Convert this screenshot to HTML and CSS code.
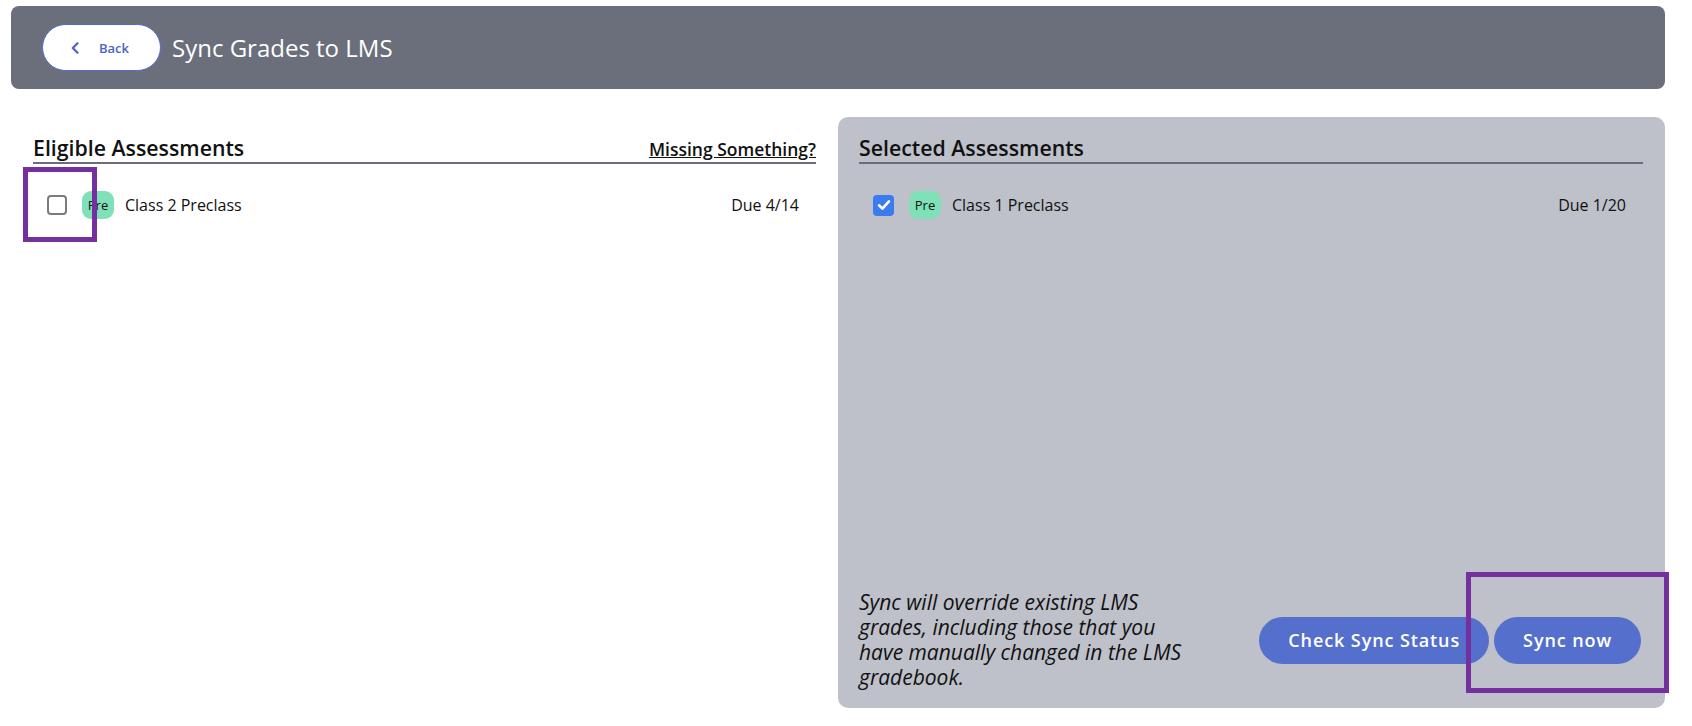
FILE: index.html
```html
<!DOCTYPE html>
<html>
<head>
  <meta charset="UTF-8">
  <meta name="viewport" content="width=device-width, initial-scale=1.0">
  <title>Sync Grades to LMS</title>
  <link rel="stylesheet" href="styles.css">
</head>
<body>
  <div class="page">
    <header class="topbar">
      <button class="back-btn" type="button">
        <svg width="8" height="12" viewBox="0 0 8 12"><path d="M6.5 1.2 L1.8 6 L6.5 10.8" fill="none" stroke="#4a63c8" stroke-width="2.2" stroke-linecap="round" stroke-linejoin="round"/></svg>
        <span>Back</span>
      </button>
      <h1 class="title">Sync Grades to LMS</h1>
    </header>

    <main class="columns">
      <section class="col col-eligible">
        <div class="col-head">
          <h2>Eligible Assessments</h2>
          <a class="missing" href="#">Missing Something?</a>
        </div>
        <ul class="list">
          <li class="row">
            <span class="box"></span>
            <span class="badge">Pre</span>
            <span class="name">Class 2 Preclass</span>
            <span class="due">Due 4/14</span>
          </li>
        </ul>
      </section>

      <section class="col col-selected">
        <div class="col-head">
          <h2>Selected Assessments</h2>
        </div>
        <ul class="list">
          <li class="row">
            <span class="box checked">
              <svg width="14" height="12" viewBox="0 0 14 12"><path d="M2 6.3 L5.4 9.6 L12 2.4" fill="none" stroke="#fff" stroke-width="2.6" stroke-linecap="round" stroke-linejoin="round"/></svg>
            </span>
            <span class="badge">Pre</span>
            <span class="name">Class 1 Preclass</span>
            <span class="due">Due 1/20</span>
          </li>
        </ul>
        <div class="footer">
          <p class="note">Sync will override existing LMS grades, including those that you have manually changed in the LMS gradebook.</p>
          <div class="actions">
            <button class="pill" type="button">Check Sync Status</button>
            <button class="pill" type="button">Sync now</button>
          </div>
        </div>
      </section>
    </main>
  </div>

  <!-- annotation marks -->
  <div class="mark mark-check"></div>
  <div class="mark mark-sync"></div>
</body>
</html>
```

FILE: styles.css
```css
/* base */
body {
  margin: 0;
  font-family: "Open Sans", "Noto Sans", sans-serif;
  color: #111;
  background: #fff;
}
.page {
  width: 1654px;
  padding: 6px 0 0 11px;
}

/* top bar */
.topbar {
  display: flex;
  align-items: center;
  height: 83px;
  padding-left: 31px;
  background-color: #6a6f7b;
  border-radius: 8px;
}
.back-btn {
  display: flex;
  align-items: center;
  gap: 20px;
  width: 119px;
  height: 47px;
  padding: 0 0 0 28px;
  background: #fff;
  border: 1px solid #4f6cd0;
  border-radius: 24px;
  color: #4a63c8;
  font-family: "Open Sans", sans-serif;
  font-size: 13px;
  font-weight: 600;
  cursor: pointer;
}
.title {
  margin: 0 0 0 11px;
  color: #fff;
  font-size: 24px;
  font-weight: 400;
}

/* columns */
.columns {
  display: grid;
  grid-template-columns: 827px 827px;
  margin-top: 28px;
}
.col {
  display: flex;
  flex-direction: column;
  height: 591px;
  box-sizing: border-box;
  padding: 17px 22px 18px 22px;
}
.col-selected {
  padding-left: 21px;
  background-color: #bec1c9;
  border-radius: 10px;
}
.col-head {
  display: flex;
  justify-content: space-between;
  align-items: baseline;
  border-bottom: 2px solid #6b6e7a;
}
.col-head h2 {
  margin: 0;
  font-size: 21.3px;
  line-height: 28px;
  font-weight: 600;
}
.missing {
  color: #111;
  font-size: 17.5px;
  font-weight: 600;
  text-decoration: underline;
}

/* list rows */
.list {
  list-style: none;
  margin: 0;
  padding: 0;
}
.row {
  display: flex;
  align-items: center;
  padding: 27px 17px 0 14px;
  font-size: 16px;
}
.box {
  display: flex;
  align-items: center;
  justify-content: center;
  width: 20px;
  height: 20px;
  box-sizing: border-box;
  border: 2px solid #7b7b7b;
  border-radius: 4px;
  background: #fff;
}
.box.checked {
  width: 21px;
  height: 21px;
  border: none;
  background: #3a7bf0;
}
.badge {
  display: inline-flex;
  align-items: center;
  justify-content: center;
  width: 32px;
  height: 28px;
  margin-left: 15px;
  background-color: #80e1b8;
  border-radius: 9px;
  font-size: 13px;
}
.name {
  margin-left: 11px;
}
.due {
  margin-left: auto;
}

/* footer of selected panel */
.footer {
  display: flex;
  justify-content: space-between;
  align-items: center;
  margin-top: auto;
}
.note {
  width: 335px;
  margin: 0;
  font-size: 21px;
  font-style: italic;
  line-height: 25px;
}
.actions {
  display: flex;
  gap: 5px;
  margin-right: 2px;
}
.pill {
  height: 47px;
  padding: 0 29px;
  background-color: #5470cc;
  border: none;
  border-radius: 24px;
  color: #fff;
  font-family: "Open Sans", sans-serif;
  font-size: 18px;
  font-weight: 600;
  letter-spacing: 0.9px;
  cursor: pointer;
}

/* purple annotation rectangles */
.mark {
  position: absolute;
  box-sizing: border-box;
  border: 5px solid #73309e;
}
.mark-check {
  left: 23px;
  top: 167px;
  width: 74px;
  height: 75px;
}
.mark-sync {
  left: 1466px;
  top: 572px;
  width: 203px;
  height: 121px;
}
```
